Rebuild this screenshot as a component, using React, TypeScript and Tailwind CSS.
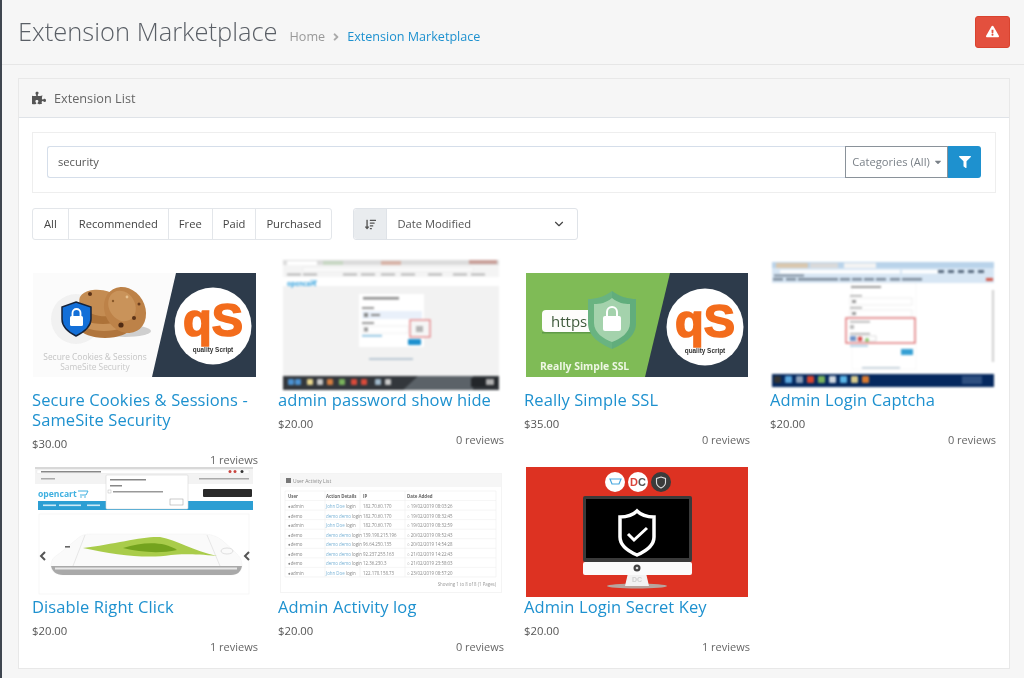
import React from "react";
import { FaPuzzlePiece, FaExclamationTriangle, FaFilter, FaSortAmountDown, FaAngleRight, FaCaretDown } from "react-icons/fa";
import { ChevronDown } from "lucide-react";

const sans = "Open Sans, sans-serif";

function QS({ cx, cy }: { cx: number; cy: number }) {
  return (
    <g>
      <circle cx={cx} cy={cy} r={38.5} fill="#fff" />
      <text x={cx - 30} y={cy + 10} textLength="60" lengthAdjust="spacingAndGlyphs" fontFamily="Liberation Sans, sans-serif" fontWeight="700" fontSize="46" fill="#f36c1c" stroke="#f36c1c" strokeWidth="1.6">qS</text>
      <text x={cx} y={cy + 26} textAnchor="middle" fontFamily="Liberation Sans, sans-serif" fontWeight="700" fontSize="6.4" fill="#333">quality Script</text>
    </g>
  );
}

function Cart({ x, y, s, c }: { x: number; y: number; s: number; c: string }) {
  return (
    <g transform={`translate(${x} ${y}) scale(${s})`} fill="none" stroke={c} strokeWidth="1">
      <path d="M0 1 H10 L8 5 H2" />
      <circle cx="3" cy="7" r="0.8" fill={c} stroke="none" />
      <circle cx="7" cy="7" r="0.8" fill={c} stroke="none" />
    </g>
  );
}

function Cookies() {
  return (
    <svg width="223" height="104" viewBox="0 0 223 104" className="block blur-[0.7px]">
      <rect width="223" height="104" fill="#fbfbfb" />
      <polygon points="143,0 223,0 223,104 119,104" fill="#2d3b4b" />
      <QS cx={180} cy={53} />
      <circle cx="43" cy="46" r="25" fill="#f1f1f1" />
      <ellipse cx="92" cy="58" rx="26" ry="6" fill="#cfcfcf" />
      <ellipse cx="72" cy="56" rx="24" ry="9" fill="#b0753d" />
      <ellipse cx="71" cy="49" rx="24" ry="9" fill="#c9935a" />
      <ellipse cx="70" cy="42" rx="24" ry="9" fill="#ad7238" />
      <ellipse cx="68" cy="30" rx="22" ry="13" fill="#c48c52" transform="rotate(10 68 30)" />
      <ellipse cx="92" cy="37" rx="20" ry="24" fill="#bd8248" transform="rotate(-30 92 37)" />
      <ellipse cx="89" cy="33" rx="13" ry="16" fill="#c9935a" transform="rotate(-30 89 33)" />
      <circle cx="57" cy="21" r="2" fill="#5c3318" />
      <circle cx="88" cy="52" r="2.6" fill="#4f2a13" />
      <circle cx="101" cy="45" r="2" fill="#5c3318" />
      <circle cx="106" cy="31" r="1.5" fill="#6a3c1d" />
      <circle cx="80" cy="28" r="1.2" fill="#8a5a2c" />
      <circle cx="94" cy="24" r="1.4" fill="#e6c08e" />
      <path d="M43 29 L58 34 V46 C58 55 49 60 43 63 C37 60 29 55 29 46 V34 Z" fill="#136fd8" stroke="#16233a" strokeWidth="1.5" />
      <rect x="37" y="43" width="13" height="10" rx="1.5" fill="#fff" />
      <path d="M39.500 43 v-3 a4 4 0 0 1 8 0 v3" fill="none" stroke="#fff" strokeWidth="1.8" />
      <text x="62" y="87" textAnchor="middle" fontFamily={sans} fontSize="8.4" fill="#c4c4c4">Secure Cookies &amp; Sessions</text>
      <text x="62" y="97" textAnchor="middle" fontFamily={sans} fontSize="8.4" fill="#c8c8c8">SameSite Security</text>
    </svg>
  );
}

function Ssl() {
  return (
    <svg width="222" height="104" viewBox="0 0 222 104" className="block blur-[0.7px]">
      <rect width="222" height="104" fill="#7fbb56" />
      <polygon points="144,0 222,0 222,104 119,104" fill="#2d3b4b" />
      <QS cx={179} cy={54} />
      <rect x="16" y="37" width="58" height="22" rx="4" fill="#fdfdfb" />
      <rect x="16" y="59" width="52" height="1.5" fill="#5f9a48" />
      <text x="25" y="54" fontFamily={sans} fontSize="15" fill="#3f5a3c">https</text>
      <path d="M86 18 C94 24 102 26 110 26 V50 C110 64 97 71 86 76 C75 71 62 64 62 50 V26 C70 26 78 24 86 18 Z" fill="#69b381" />
      <path d="M86 18 C94 24 102 26 110 26 V50 C110 64 97 71 86 76 Z" fill="#5aa777" opacity="0.5" />
      <path d="M86 25 C92 30 98 31 104 31 V50 C104 60 94 66 86 69 C78 66 68 60 68 50 V31 C74 31 80 30 86 25 Z" fill="#a4d2ac" />
      <rect x="77" y="43" width="18" height="15" rx="2" fill="#fff" />
      <path d="M81 43 v-4 a5 5 0 0 1 10 0 v4" fill="none" stroke="#fff" strokeWidth="2" />
      <text x="14" y="97" fontFamily={sans} fontWeight="700" fontSize="10.4" fill="#eef7e4">Really Simple SSL</text>
    </svg>
  );
}

function PasswordShot() {
  return (
    <svg width="216" height="130" viewBox="0 0 216 130" className="block blur-[0.8px]">
      <rect width="216" height="130" fill="#f2f2f2" />
      <rect width="216" height="17" fill="#f4f4f4" />
      <rect y="0" width="216" height="5" fill="#dcdcdc" />
      <rect x="4" y="1" width="30" height="4" fill="#fff" />
      <rect x="40" y="1" width="20" height="4" fill="#c8d8c4" />
      <rect x="98" y="1" width="20" height="4" fill="#d8b4a8" />
      <rect x="186" y="0" width="28" height="4" fill="#c9a09a" />
      <rect x="20" y="8" width="170" height="3" fill="#fff" stroke="#e2e2e2" strokeWidth="0.5" />
      {[4, 20, 60, 78, 98, 118, 145, 170, 188].map((x) => (<rect key={x} x={x} y={13.5} width="14" height="2" fill="#b5b5b5" />))}
      <rect y="17" width="216" height="9" fill="#fff" />
      <text x="4" y="26" fontFamily={sans} fontWeight="700" fontSize="6.5" fill="#2f9fdc">opencart</text>
      <Cart x={27} y={20} s={0.65} c="#2f9fdc" />
      <rect x="76" y="34" width="65" height="53" fill="#fff" />
      <rect x="80" y="37" width="36" height="2.5" fill="#8c8c8c" />
      <rect x="79" y="47" width="12" height="2" fill="#999" />
      <rect x="79" y="51" width="60" height="8" fill="#e9f0fa" />
      <rect x="81" y="53" width="4" height="4" fill="#888" />
      <rect x="88" y="54" width="9" height="2" fill="#888" />
      <rect x="79" y="62" width="12" height="2" fill="#999" />
      <rect x="79" y="66" width="46" height="7" fill="#fff" stroke="#e0e0e0" strokeWidth="0.5" />
      <rect x="81" y="67.5" width="4" height="4" fill="#999" />
      <rect x="79" y="75" width="20" height="1.5" fill="#7ab8dc" />
      <rect x="127" y="60" width="20" height="17" fill="#f6f6f6" stroke="#e2777a" strokeWidth="1.2" />
      <rect x="133" y="66" width="7" height="6" fill="#b5b5b5" />
      <rect x="125" y="79" width="13" height="6" rx="1" fill="#1e91cf" />
      <rect x="86" y="98" width="44" height="2" fill="#b9c8d4" />
      <rect y="116" width="216" height="14" fill="#33373c" />
      <polygon points="120,130 135,116 190,116 190,130" fill="#5b6268" />
      {[5, 12, 24, 34, 44, 56, 68, 78, 92, 102].map((x, i) => (
        <rect key={x} x={x} y={119} width="6" height="6" rx="1" fill={["#4a90d0", "#4a90d0", "#e7d58c", "#c9c9c9", "#d47b3f", "#79b25c", "#d94a3a", "#d94a3a", "#9fb7c9", "#c9c9c9"][i]} />
      ))}
      <rect x="188" y="118" width="26" height="9" fill="#23262a" />
      <rect x="203" y="119" width="8" height="6" fill="#b0b0b0" />
    </svg>
  );
}

function CaptchaShot() {
  return (
    <svg width="222" height="125" viewBox="0 0 222 125" className="block blur-[0.8px]">
      <rect width="222" height="125" fill="#fff" />
      <rect width="222" height="6" fill="#b9d3ea" />
      <rect x="4" y="1" width="32" height="5" fill="#d9c7ae" />
      <rect x="38" y="1" width="28" height="5" fill="#d9d9d9" />
      <rect x="72" y="1" width="32" height="5" fill="#f3f3f3" />
      <rect y="6" width="222" height="15" fill="#d7e6f4" />
      <rect x="8" y="8" width="120" height="3.5" fill="#fff" />
      <rect x="130" y="8" width="36" height="3.5" fill="#fff" />
      {[166, 176, 186, 196, 206].map((x) => (<rect key={x} x={x} y={8} width="6" height="3" fill="#5a6c80" />))}
      <rect x="2" y="12.5" width="30" height="2" fill="#7c8a99" />
      {[1, 14, 26, 36, 46, 56, 68, 80, 92, 104, 118, 130, 140].map((x) => (<rect key={x} x={x} y={16} width="10" height="2.5" fill="#7c8a99" />))}
      <rect x="214" y="16" width="7" height="3" fill="#d55a4c" />
      <rect x="80" y="21" width="64" height="86" fill="#fff" stroke="#efefef" strokeWidth="0.5" />
      <rect x="79" y="24" width="30" height="2" fill="#9a9a9a" />
      <rect x="78" y="33" width="12" height="1.5" fill="#aaa" />
      <rect x="78" y="36" width="62" height="7" fill="#fff" stroke="#ddd" strokeWidth="0.5" />
      <rect x="80" y="38" width="4" height="3" fill="#999" />
      <rect x="78" y="45" width="12" height="1.5" fill="#aaa" />
      <rect x="78" y="48" width="62" height="7" fill="#fff" stroke="#ddd" strokeWidth="0.5" />
      <rect x="80" y="50" width="4" height="3" fill="#999" />
      <rect x="74" y="56" width="69" height="25" fill="#fff" stroke="#d9595c" strokeWidth="1.2" />
      <rect x="78" y="59" width="20" height="1.5" fill="#aaa" />
      <rect x="78" y="63" width="4" height="4" fill="#bbb" />
      <rect x="78" y="71" width="20" height="1.5" fill="#aaa" />
      <rect x="78" y="74" width="6" height="5" fill="#6f93c8" />
      <rect x="84" y="74" width="20" height="5" fill="#fff" stroke="#bbb" strokeWidth="0.5" />
      <circle cx="88" cy="77" r="2.4" fill="#d84a4a" />
      <circle cx="95" cy="78" r="2" fill="#88c36a" />
      <rect x="78" y="83" width="18" height="1.5" fill="#9cc4dd" />
      <rect x="129" y="87" width="12" height="6" fill="#36a0d4" />
      <rect x="90" y="105" width="38" height="1.5" fill="#b9c8d4" />
      <rect x="220" y="28" width="2" height="72" fill="#cfcfcf" />
      <rect y="112" width="222" height="13" fill="#06295f" />
      {[2, 13, 24, 35, 46, 57, 68, 79, 90].map((x, i) => (
        <rect key={x} x={x} y={114} width="7" height="7" rx="1" fill={["#333", "#5aa7de", "#8c9fb8", "#d9442e", "#79b25c", "#d0d7df", "#5ab5e6", "#d8c98a", "#d9782e"][i]} />
      ))}
      <rect x="190" y="114" width="20" height="8" fill="#2e4f80" />
    </svg>
  );
}

function RightClickShot() {
  return (
    <svg width="218" height="128" viewBox="0 0 218 128" className="block blur-[0.7px]">
      <rect width="218" height="128" fill="#fff" />
      <rect x="4" y="47" width="210" height="80" fill="none" stroke="#f2f2f2" strokeWidth="0.6" />
      <rect width="218" height="2" fill="#d8d8d8" />
      <rect y="2" width="218" height="15" fill="#f3f3f3" />
      <rect x="2" y="3" width="212" height="3.5" fill="#fff" stroke="#e3e3e3" strokeWidth="0.4" />
      <rect x="6" y="4" width="60" height="1.5" fill="#888" />
      {[195, 200].map((x) => (<circle key={x} cx={x} cy={4.5} r="1.5" fill="#c8453f" />))}
      <circle cx="207" cy="4.5" r="1.5" fill="#333" />
      <rect x="6" y="11" width="14" height="1.5" fill="#aaa" />
      <rect x="164" y="11" width="50" height="1.5" fill="#aaa" />
      <text x="3" y="30" fontFamily={sans} fontWeight="700" fontSize="8.6" fill="#3fb0e0">opencart</text>
      <Cart x={43} y={23} s={1} c="#3fb0e0" />
      <rect x="142" y="22" width="10" height="8" fill="#eee" />
      <rect x="168" y="22" width="49" height="8" rx="1" fill="#2a2a2a" />
      <rect x="3" y="34" width="215" height="9" fill="#2c9ed3" />
      {[8, 24, 52].map((x) => (<rect key={x} x={x} y={37.5} width={x === 24 ? 22 : 13} height="1.6" fill="#cde9f6" />))}
      <rect x="71" y="8" width="82" height="34" rx="1" fill="#fff" stroke="#d6d6d6" strokeWidth="0.6" />
      <rect x="75" y="12" width="36" height="1.5" fill="#888" />
      <rect x="75" y="18" width="12" height="1.5" fill="#888" />
      <rect x="73" y="23" width="3" height="3" fill="#fff" stroke="#aaa" strokeWidth="0.4" />
      <rect x="78" y="24" width="50" height="1.5" fill="#999" />
      <rect x="135" y="32" width="13" height="6" fill="#fff" stroke="#999" strokeWidth="0.5" />
      <path d="M16 99 C16 92 19 90 25 86 L42 72 C46 68 50 67 56 67 L168 67 C176 67 182 69 188 74 L201 86 C205 90 207 93 207 99 C207 104 203 108 196 108 L28 108 C20 108 16 104 16 99 Z" fill="#fafafa" stroke="#f0f0f0" strokeWidth="0.5" />
      <path d="M16 99 C17 104 21 108 28 108 L196 108 C203 108 206 104 207 99 Z" fill="#a9a9a9" />
      <rect x="20" y="100.500" width="182" height="2" fill="#e8e8e8" />
      <line x1="38" y1="99" x2="50" y2="68" stroke="#d8d8d8" strokeWidth="0.6" />
      <line x1="172" y1="68" x2="185" y2="99" stroke="#d8d8d8" strokeWidth="0.6" />
      <rect x="30" y="79" width="5" height="1.6" fill="#666" />
      <ellipse cx="192" cy="84" rx="6" ry="3" fill="none" stroke="#ccc" strokeWidth="0.6" />
      <path d="M48 81 C80 77 108 69 125 70 C142 73 158 84 182 89 C160 87 146 87 136 88 C112 92 80 88 48 81 Z" fill="#a9cc4a" />
      <path d="M88 81 C108 75 128 74 142 83 C124 87 104 85 88 81 Z" fill="#74a31e" />
      <path d="M10 85 l-4 4 l4 4" fill="none" stroke="#555" strokeWidth="2" />
      <path d="M210 85 l4 4 l-4 4" transform="rotate(180 212 89)" fill="none" stroke="#555" strokeWidth="2" />
    </svg>
  );
}

const logRows = [
  ["admin", "John Doe", "182.70.60.170", "19/02/2019 08:03:26"],
  ["demo", "demo demo", "182.70.60.170", "19/02/2019 08:32:45"],
  ["admin", "John Doe", "182.70.60.170", "19/02/2019 08:32:59"],
  ["demo", "demo demo", "139.190.215.196", "20/02/2019 09:52:43"],
  ["demo", "demo demo", "96.64.250.135", "20/02/2019 14:54:28"],
  ["demo", "demo demo", "92.237.255.163", "21/02/2019 14:22:43"],
  ["demo", "demo demo", "12.36.230.3", "21/02/2019 23:58:03"],
  ["admin", "John Doe", "122.170.158.73", "23/02/2019 08:57:20"],
];

function ActivityShot() {
  const f = { fontFamily: sans, fontSize: 4.4 };
  return (
    <svg width="222" height="120" viewBox="0 0 222 120" className="block blur-[0.7px]">
      <rect width="222" height="120" fill="#f4f4f4" />
      <rect x="1" y="1" width="220" height="118" fill="#fff" />
      <rect x="1" y="1" width="220" height="13" fill="#f6f6f6" />
      <rect x="6" y="5" width="5" height="5" fill="#777" />
      <text x="13" y="10" {...f} fontSize={5} fill="#888">User Activity List</text>
      {[0, 1, 2, 3, 4, 5, 6, 7, 8, 9].map((i) => (<line key={i} x1="5" x2="216" y1={18 + i * 9.55} y2={18 + i * 9.55} stroke="#eee" strokeWidth="0.6" />))}
      {[5, 45, 80, 125, 216].map((x) => (<line key={x} x1={x} x2={x} y1="18" y2="104" stroke="#eee" strokeWidth="0.6" />))}
      <g {...f} fontWeight="700" fill="#666">
        <text x="8" y="25">User</text>
        <text x="46" y="25">Action Details</text>
        <text x="83" y="25">IP</text>
        <text x="127" y="25">Date Added</text>
      </g>
      {logRows.map((r, i) => {
        const y = 35 + i * 9.55;
        return (
          <g key={i} {...f} fill="#888">
            <text x="8" y={y}>{"\u25cf"}{r[0]}</text>
            <text x="46" y={y} fill="#7ab3d6">{r[1]}<tspan fill="#888"> login</tspan></text>
            <text x="83" y={y}>{r[2]}</text>
            <text x="127" y={y}>{"\u25cb"} {r[3]}</text>
          </g>
        );
      })}
      <text x="216" y="113" textAnchor="end" {...f} fill="#999">Showing 1 to 8 of 8 (1 Pages)</text>
    </svg>
  );
}

function SecretKey() {
  return (
    <svg width="222" height="130" viewBox="0 0 222 130" className="block blur-[0.5px]">
      <rect width="222" height="130" fill="#dd3222" />
      <circle cx="89" cy="15" r="10" fill="#fff" />
      <path d="M84 12 h11 l-2 5 h-7 z" fill="none" stroke="#48a8e0" strokeWidth="1.2" />
      <circle cx="112" cy="15" r="10" fill="#fff" />
      <text x="112" y="19" textAnchor="middle" fontFamily="Liberation Sans, sans-serif" fontWeight="700" fontSize="11" fill="#555"><tspan fill="#d9443a">D</tspan>C</text>
      <circle cx="135" cy="15" r="10" fill="#3b3b3b" />
      <path d="M135 10 l4.500 1.500 v4 c0 3 -2.500 4.500 -4.500 5.500 c-2 -1 -4.500 -2.500 -4.500 -5.500 v-4 z" fill="none" stroke="#ddd" strokeWidth="1.1" />
      <ellipse cx="111" cy="119" rx="30" ry="2.5" fill="#b7a59f" />
      <polygon points="102,106 120,106 123,119 99,119" fill="#f2f2f2" />
      <text x="111" y="115" textAnchor="middle" fontFamily="Liberation Sans, sans-serif" fontWeight="700" fontSize="7" fill="#d0d0d0">DC</text>
      <rect x="57" y="95" width="109" height="13" rx="2" fill="#fbfbfb" />
      <rect x="57" y="29" width="109" height="66" rx="2" fill="#3a3a3a" />
      <rect x="60" y="32" width="103" height="59" fill="#000" />
      <circle cx="111" cy="101" r="3.500" fill="#444" />
      <circle cx="111" cy="101" r="1.300" fill="#ddd" />
      <path d="M111 44 C116 49 122 50 128 50 V70 C128 80 118 85 111 88 C104 85 94 80 94 70 V50 C100 50 106 49 111 44 Z" fill="none" stroke="#fff" strokeWidth="3.500" />
      <path d="M102 67 L108 73 L121 61" fill="none" stroke="#fff" strokeWidth="3" />
    </svg>
  );
}

type Item = { title: React.ReactNode; price: string; reviews: string; image: React.ReactNode; pos: string };

const row1: Item[] = [
  { title: "Secure Cookies & Sessions - SameSite Security", price: "$30.00", reviews: "1 reviews", image: <Cookies />, pos: "ml-px mt-[11px]" },
  { title: "admin password show hide", price: "$20.00", reviews: "0 reviews", image: <PasswordShot />, pos: "ml-[5px] -mt-[2px]" },
  { title: "Really Simple SSL", price: "$35.00", reviews: "0 reviews", image: <Ssl />, pos: "ml-[2px] mt-[11px]" },
  { title: "Admin Login Captcha", price: "$20.00", reviews: "0 reviews", image: <CaptchaShot />, pos: "ml-[2px]" },
];

const row2: Item[] = [
  { title: "Disable Right Click", price: "$20.00", reviews: "1 reviews", image: <RightClickShot />, pos: "ml-[3px] -mt-px" },
  { title: "Admin Activity log", price: "$20.00", reviews: "0 reviews", image: <ActivityShot />, pos: "ml-[2px] mt-[5px]" },
  { title: "Admin Login Secret Key", price: "$20.00", reviews: "1 reviews", image: <SecretKey />, pos: "ml-[2px] -mt-px" },
];

function Card({ item, area }: { item: Item; area: string }) {
  return (
    <div className="min-w-0">
      <div className={area}>
        <div className={item.pos}>{item.image}</div>
      </div>
      <a className="block text-[16.5px] leading-[20px] text-[#1e91cf] tracking-[0.1px]">{item.title}</a>
      <div className="mt-[6px] text-[11.3px] leading-[16px] text-[#555]">{item.price}</div>
      <div className="text-right text-[11px] leading-[15px] text-[#666]">{item.reviews}</div>
    </div>
  );
}

export default function App() {
  const tabs = ["All", "Recommended", "Free", "Paid", "Purchased"];
  return (
    <div className="w-[1024px] h-[678px] overflow-hidden bg-[#f6f6f6] border-l-2 border-[#3f4650] blur-[0.3px]" style={{ fontFamily: "'Open Sans', sans-serif" }}>
      <header className="h-[65px] border-b border-[#e6e6e6] pl-[16px] pr-[14px] flex items-center justify-between">
        <div className="flex items-center">
          <h1 className="text-[25.5px] font-light text-[#5a5f66] leading-none">Extension Marketplace</h1>
          <nav className="ml-[12px] mt-[10px] flex items-center text-[12.6px] leading-none">
            <span className="text-[#999]">Home</span>
            <FaAngleRight className="mx-[5px] text-[#aaa] text-[12px]" />
            <span className="text-[#1e91cf]">Extension Marketplace</span>
          </nav>
        </div>
        <button className="w-[35px] h-[32px] -mt-[1px] rounded-[3px] bg-[#e3503e] border border-[#d9432f] flex items-center justify-center text-white text-[13px]">
          <FaExclamationTriangle />
        </button>
      </header>

      <main className="pl-[16px] pr-[14px] pt-[13px]">
        <section className="h-[591px] border border-[#e8e8e8] bg-white">
          <div className="h-[39px] bg-[#f6f6f6] border-b border-[#dfe3e8] flex items-center pl-[13px] text-[12.7px] text-[#666]">
            <FaPuzzlePiece className="text-[#555] text-[14px] mr-[8px]" />
            <span className="mt-px">Extension List</span>
          </div>
          <div className="px-[13px] pt-[14px]">
            <div className="h-[61px] border border-[#eeeeee] px-[14px] pt-[13px]">
              <div className="flex h-[32px] text-[11.2px]">
                <div className="flex-1 border border-[#d5deea] border-r-0 rounded-l-[3px] flex items-center pl-[10px] text-[#555]">security</div>
                <div className="w-[103px] border border-[#8a929a] flex items-center justify-center gap-[3px] pl-[2px] text-[#7a8188]">
                  Categories (All)
                  <FaCaretDown className="text-[10px]" />
                </div>
                <button className="w-[33px] bg-[#1e91cf] rounded-r-[3px] flex items-center justify-center text-white text-[12px]">
                  <FaFilter />
                </button>
              </div>
            </div>

            <div className="mt-[15px] flex items-start">
              <div className="flex h-[32px] border border-[#e3e6ea] rounded-[3px] text-[11.2px] text-[#444]">
                {tabs.map((t, i) => (
                  <div key={t} className={i === 0 ? "pl-[11px] pr-[11px] flex items-center" : "px-[10px] flex items-center border-l border-[#e3e6ea]"}>{t}</div>
                ))}
              </div>
              <div className="ml-[21px] w-[225px] h-[32px] border border-[#dfe3e8] rounded-[3px] flex items-center text-[11.2px] text-[#555]">
                <div className="w-[33px] h-full bg-[#e9ecef] border-r border-[#dfe3e8] rounded-l-[3px] flex items-center justify-center text-[#555] text-[11px]">
                  <FaSortAmountDown />
                </div>
                <span className="ml-[10px] flex-1">Date Modified</span>
                <ChevronDown className="w-[14px] h-[14px] mr-[11px] text-[#444]" />
              </div>
            </div>

            <div className="mt-[22px] grid grid-cols-4 gap-x-[20px] gap-y-px">
              {row1.map((it, i) => (<Card key={i} item={it} area="flow-root h-[128px]" />))}
              {row2.map((it, i) => (<Card key={i} item={it} area="flow-root h-[129px]" />))}
            </div>
          </div>
        </section>
      </main>
    </div>
  );
}
